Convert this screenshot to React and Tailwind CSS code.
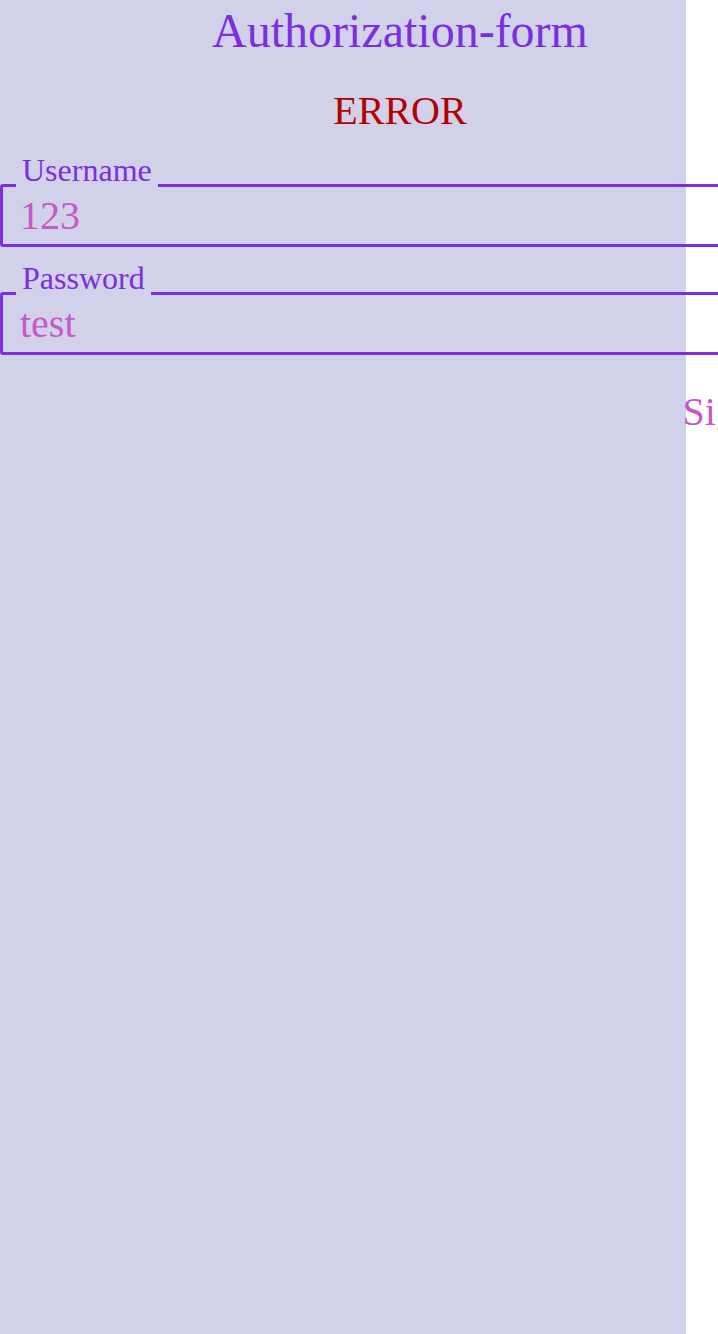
import { useState } from 'react'

const Page = () => {
  const [model, setModel] = useState({
    username: '123',
    password: 'test',
  })

  return (
    <div className="w-[686px] min-h-screen bg-[#d1d1ea] font-['Liberation_Serif',serif]">
      <div className="w-[800px]">
        <h1 className="text-center text-[48px] leading-[55px] pt-[3px] text-[#7c2ee0]">Authorization-form</h1>
        <div className="text-center text-[40px] leading-[46px] mt-[30px] text-[#b30000]">ERROR</div>
        <form className="mt-[50px]" onSubmit={e => e.preventDefault()}>
          <Field label="Username" model={model} setter={setModel} field="username" type="text" />
          <div className="h-[45px]"></div>
          <Field label="Password" model={model} setter={setModel} field="password" type="text" />
          <div className="text-right pr-[3px] mt-[34px]">
            <button type="submit" className="text-[40px] leading-[46px] text-[#c659c8] bg-transparent">Sign in</button>
          </div>
        </form>
      </div>
    </div>
  )
}

export default Page

function Field({ label, model, setter, field, type }) {
  return (
    <fieldset className="border-[3px] border-[#7c2ee0] rounded-[3px] px-[13px] m-0">
      <legend className="px-[6px] text-[32px] leading-[0px] h-0 text-[#7c2ee0]">
        <span className="inline-block -translate-y-4">{label}</span>
      </legend>
      <input type={type} value={model[field]}
        onChange={e => {
          setter(m => ({
            ...m,
            [field]: e.target.value
          }))
        }}
        className="block w-full h-[57px] pl-1 bg-transparent text-[40px] text-[#c659c8] focus:outline-none font-['Liberation_Serif',serif]"
      />
    </fieldset>
  )
}
